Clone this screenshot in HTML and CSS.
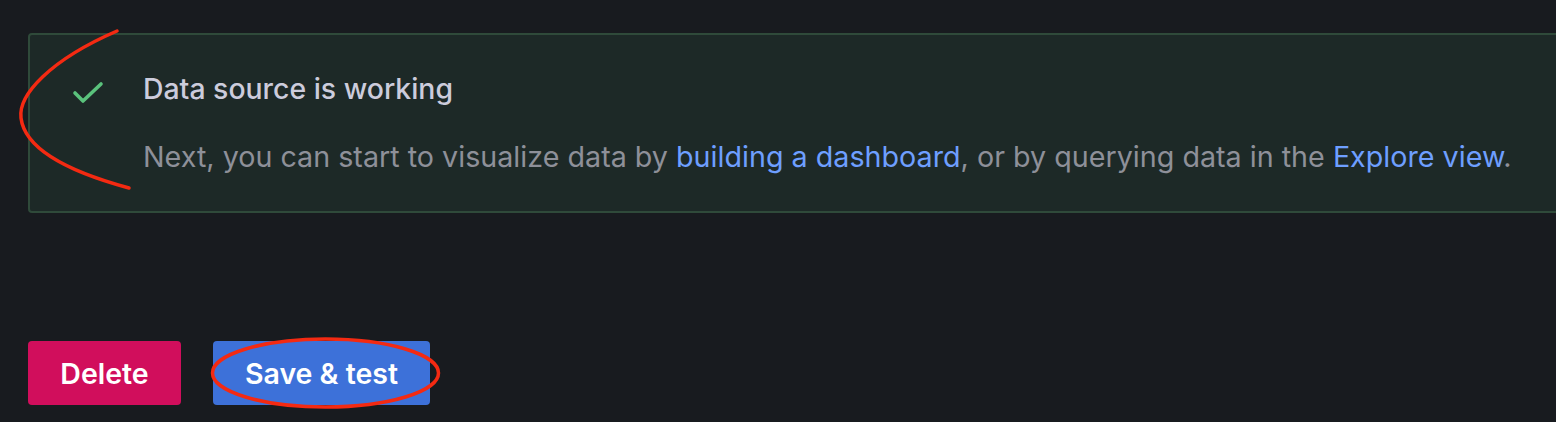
FILE: index.html
```html
<!DOCTYPE html>
<html>
<head>
<meta charset="utf-8">
<link rel="stylesheet" href="styles.css">
</head>
<body>
<div class="page">
  <div class="alert">
    <div class="alert-icon">
      <svg width="32" height="26" viewBox="0 0 32 26"><path d="M3 13 L11 21 L29 4" fill="none" stroke="#5ac27c" stroke-width="3.6" stroke-linecap="round" stroke-linejoin="round"/></svg>
    </div>
    <div class="alert-body">
      <div class="alert-title">Data source is working</div>
      <div class="alert-text">Next, you can start to visualize data by <a class="link">building a dashboard</a>, or by querying data in the <a class="link">Explore view</a>.</div>
    </div>
  </div>
  <div class="actions">
    <button class="btn btn-danger">Delete</button>
    <button class="btn btn-primary">Save &amp; test</button>
  </div>
  <svg class="annot" width="1556" height="422" viewBox="0 0 1556 422">
    <path d="M117 31 C 50 60, 18 95, 21 118 C 25 150, 70 172, 129 188" fill="none" stroke="#f42a12" stroke-width="3.5" stroke-linecap="round"/>
    <ellipse cx="325.5" cy="373" rx="113" ry="34" fill="none" stroke="#f42a12" stroke-width="3.5"/>
  </svg>
</div>
</body>
</html>
```
FILE: styles.css
```css
html, body {
  margin: 0;
  padding: 0;
  background: #181b1f;
  font-family: Inter, "Noto Sans", sans-serif;
  overflow: hidden;
}
.page {
  position: relative;
  width: 1556px;
  height: 422px;
  padding: 33px 0 0 28px;
  box-sizing: border-box;
}
.alert {
  box-sizing: border-box;
  width: 1560px;
  height: 180px;
  background: #1d2927;
  border: 2px solid #2f4a3a;
  border-radius: 4px;
  display: flex;
  align-items: flex-start;
  padding: 38px 0 0 42px;
}
.alert-icon {
  width: 71px;
  padding-top: 7px;
}
.alert-body {
  display: flex;
  flex-direction: column;
  gap: 36px;
}
.alert-title {
  color: #ccccdc;
  font-size: 28.4px;
  font-weight: 500;
  line-height: 32px;
}
.alert-text {
  color: #8e9099;
  font-size: 28.7px;
  line-height: 32px;
}
.link {
  color: #6e9fff;
}
.actions {
  display: flex;
  gap: 32px;
  margin-top: 128px;
}
.btn {
  height: 64px;
  border: none;
  border-radius: 4px;
  color: #ffffff;
  font-family: Inter, "Noto Sans", sans-serif;
  font-size: 28.5px;
  font-weight: 600;
  padding: 0;
}
.btn-danger {
  background: #d10e5c;
  width: 153px;
}
.btn-primary {
  background: #3d71d9;
  width: 217px;
}
.annot {
  position: absolute;
  left: 0;
  top: 0;
  pointer-events: none;
}
```
